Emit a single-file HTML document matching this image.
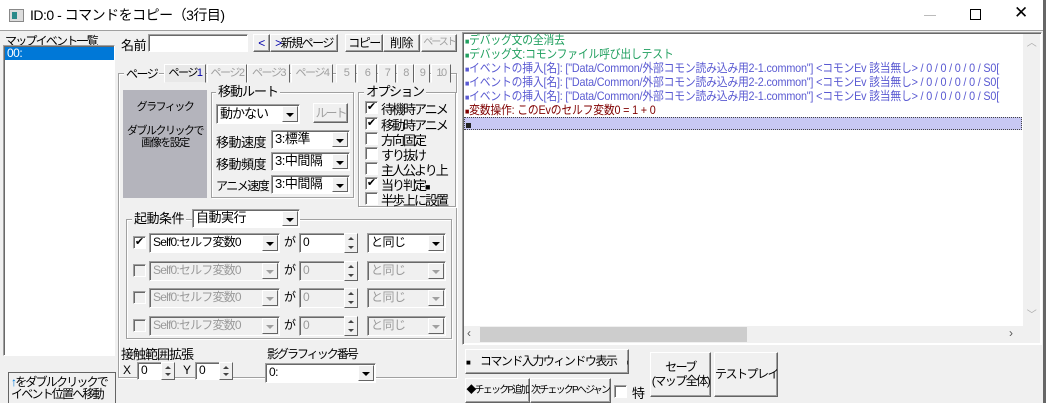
<!DOCTYPE html>
<html><head><meta charset="utf-8"><style>
*{box-sizing:border-box;margin:0;padding:0;white-space:nowrap}
body{width:1046px;height:403px;overflow:hidden;background:#f0f0f0;font-family:"Liberation Sans","Noto Sans CJK JP",sans-serif;font-size:12px;color:#000;position:relative;letter-spacing:-0.5px}
.a{position:absolute}
.btn{position:absolute;background:#f0f0f0;border:1px solid;border-color:#fff #646464 #646464 #fff;box-shadow:inset -1px -1px 0 #a0a0a0;text-align:center;font-size:12px;line-height:16px;overflow:hidden}
.dis{color:#a0a0a0}
.sunk{position:absolute;background:#fff;border:1px solid;border-color:#a0a0a0 #fff #fff #a0a0a0;box-shadow:inset 1px 1px 0 #696969}
.combo{position:absolute;background:#fff;border:1px solid;border-color:#a0a0a0 #fff #fff #a0a0a0;box-shadow:inset 1px 1px 0 #696969;padding-left:3px;font-size:12px;line-height:16px;overflow:hidden}
.combo.g{background:#f0f0f0;color:#9a9a9a}
.combo .ar{position:absolute;right:1px;top:1px;bottom:1px;width:16px;background:#f0f0f0;border:1px solid;border-color:#fff #646464 #646464 #fff}
.combo .ar:after{content:"";position:absolute;left:3px;top:6px;border-left:4px solid transparent;border-right:4px solid transparent;border-top:4px solid #000}
.combo.g .ar:after{border-top-color:#a0a0a0}
.grp{position:absolute;border:1px solid #a0a0a0;box-shadow:1px 1px 0 #fff,inset 1px 1px 0 #fff}
.gt{position:absolute;background:#f0f0f0;padding:0 2px;font-size:13px;line-height:14px}
.cb{position:absolute;width:13px;height:13px;background:#fff;border:1px solid;border-color:#a0a0a0 #fff #fff #a0a0a0;box-shadow:inset 1px 1px 0 #696969;font-size:11px;line-height:11px;text-align:center;letter-spacing:0}
.cb.g{background:#f0f0f0}
.tab{position:absolute;top:64px;height:19px;border:1px solid;border-color:#fff #646464 #f0f0f0 #fff;color:#a0a0a0;text-align:center;font-size:11px;line-height:17px;background:#f0f0f0;letter-spacing:-1.5px;overflow:hidden}
.spin{position:absolute;width:14px;background:#f0f0f0;border:1px solid;border-color:#fff #646464 #646464 #fff}
.spin:before{content:"";position:absolute;left:3px;top:3px;border-left:3px solid transparent;border-right:3px solid transparent;border-bottom:3px solid #444}
.spin:after{content:"";position:absolute;left:3px;bottom:3px;border-left:3px solid transparent;border-right:3px solid transparent;border-top:3px solid #444}
.ln{position:absolute;left:465px;font-size:12px;line-height:14px;transform:scaleX(0.9);transform-origin:left;letter-spacing:-0.2px}
.opt{position:absolute;left:381px;font-size:13px;letter-spacing:-2px}
</style></head><body>
<div class="a" style="left:0;top:0;width:1046px;height:30px;background:#fff"></div>
<div class="a" style="left:9px;top:9px;width:15px;height:13px;border:1px solid #888;background:#ddd"><div style="position:absolute;left:2px;top:2px;width:5px;height:7px;background:#2a8a8a"></div></div>
<div class="a" style="left:30px;top:5px;font-size:14px;line-height:20px;letter-spacing:-0.5px">ID:0 -  コマンドをコピー（3行目)</div>
<div class="a" style="left:924px;top:15px;width:12px;height:1px;background:#bbb"></div>
<div class="a" style="left:970px;top:9px;width:11px;height:11px;border:1px solid #000"></div>
<div class="a" style="left:1014px;top:3px;font-size:17px;line-height:20px">✕</div>
<div class="a" style="left:0;top:30px;width:1046px;height:1px;background:#a0a0a0"></div>
<div class="a" style="left:1043px;top:0;width:3px;height:403px;background:#666"></div>

<div class="a" style="left:5px;top:32px;font-size:12px;letter-spacing:-1.8px">マップイベント一覧</div>
<div class="sunk" style="left:3px;top:45px;width:112px;height:311px"></div>
<div class="a" style="left:5px;top:47px;width:109px;height:13px;background:#0078d7;color:#fff;font-size:12px;line-height:13px;padding-left:2px">00:</div>
<div class="a" style="left:8px;top:372px;width:108px;height:31px;border:1px solid #646464;border-bottom:none;font-size:12px;line-height:12px;padding:3px 0 0 2px;letter-spacing:-1.8px;overflow:hidden"><span style="color:#0078d7">↑</span>をダブルクリックで<br>イベント位置へ移動</div>

<div class="a" style="left:121px;top:35px;font-size:13px">名前</div>
<div class="sunk" style="left:148px;top:34px;width:100px;height:18px"></div>
<div class="btn" style="left:253px;top:34px;width:17px;height:18px;color:#00a">&lt;</div>
<div class="btn" style="left:270px;top:34px;width:68px;height:18px;letter-spacing:-1.5px"><span style="color:#00a">&gt;</span>新規ページ</div>
<div class="btn" style="left:345px;top:34px;width:38px;height:18px;letter-spacing:-1.5px">コピー</div>
<div class="btn" style="left:383px;top:34px;width:37px;height:18px">削除</div>
<div class="btn dis" style="left:421px;top:34px;width:36px;height:18px;font-size:10px;letter-spacing:-2px">ペースト</div>

<div class="grp" style="left:118px;top:73px;width:339px;height:305px"></div>
<div class="gt" style="left:124px;top:67px;font-size:12px;letter-spacing:-1.5px">ページ</div>
<div class="tab" style="left:164px;width:42px;color:#000;background:#e8e8e8">ページ<span style="color:#00a">1</span></div>
<div class="tab" style="left:207px;width:40px">ページ2</div>
<div class="tab" style="left:247px;width:43px">ページ3</div>
<div class="tab" style="left:291px;width:42px">ページ4</div>
<div class="tab" style="left:336px;width:20px">5</div>
<div class="tab" style="left:357px;width:20px">6</div>
<div class="tab" style="left:378px;width:18px">7</div>
<div class="tab" style="left:397px;width:17px">8</div>
<div class="tab" style="left:414px;width:16px">9</div>
<div class="tab" style="left:431px;width:20px">10</div>

<div class="a" style="left:123px;top:90px;width:84px;height:108px;background:#b4b4bc;text-align:center;font-size:11px;line-height:12px;padding-top:11px;letter-spacing:-1.5px">グラフィック<br><br>ダブルクリックで<br>画像を設定</div>

<div class="grp" style="left:211px;top:92px;width:143px;height:106px"></div>
<div class="gt" style="left:216px;top:85px;font-size:13px;letter-spacing:-1px">移動ルート</div>
<div class="combo" style="left:216px;top:104px;width:84px;height:20px;font-size:13px;line-height:17px;letter-spacing:-1px">動かない<div class="ar"></div></div>
<div class="btn dis" style="left:313px;top:103px;width:35px;height:20px;letter-spacing:-2px;line-height:18px">ルート</div>
<div class="a" style="left:216px;top:132px;font-size:13px;letter-spacing:-0.5px">移動速度</div>
<div class="combo" style="left:271px;top:130px;width:79px;height:19px;font-size:13px;line-height:16px">3:標準<div class="ar"></div></div>
<div class="a" style="left:216px;top:154px;font-size:13px;letter-spacing:-0.5px">移動頻度</div>
<div class="combo" style="left:271px;top:152px;width:79px;height:19px;font-size:13px;line-height:16px">3:中間隔<div class="ar"></div></div>
<div class="a" style="left:216px;top:177px;font-size:12px;letter-spacing:-1.5px">アニメ速度</div>
<div class="combo" style="left:271px;top:175px;width:79px;height:19px;font-size:13px;line-height:16px">3:中間隔<div class="ar"></div></div>

<div class="grp" style="left:358px;top:92px;width:98px;height:115px"></div>
<div class="gt" style="left:364px;top:85px;font-size:13px;letter-spacing:-1.5px">オプション</div>
<div class="cb" style="left:365px;top:101px">✔</div><div class="opt" style="top:99px">待機時アニメ</div>
<div class="cb" style="left:365px;top:117px">✔</div><div class="opt" style="top:115px">移動時アニメ</div>
<div class="cb" style="left:365px;top:132px"></div><div class="opt" style="top:130px">方向固定</div>
<div class="cb" style="left:365px;top:147px"></div><div class="opt" style="top:145px">すり抜け</div>
<div class="cb" style="left:365px;top:162px"></div><div class="opt" style="top:160px">主人公より上</div>
<div class="cb" style="left:365px;top:177px">✔</div><div class="opt" style="top:175px">当り判定<span style="font-size:9px">■</span></div>
<div class="cb" style="left:365px;top:192px"></div><div class="opt" style="top:190px">半歩上に設置</div>

<div class="grp" style="left:126px;top:219px;width:326px;height:120px"></div>
<div class="gt" style="left:132px;top:212px;font-size:13px">起動条件</div>
<div class="combo" style="left:192px;top:209px;width:108px;height:19px;font-size:13px;line-height:16px">自動実行<div class="ar"></div></div>

<div class="cb" style="left:133px;top:236px">✔</div>
<div class="combo" style="left:149px;top:233px;width:131px;height:20px;color:#000;letter-spacing:-0.8px">Self0:セルフ変数0<div class="ar"></div></div>
<div class="a" style="left:284px;top:233px;font-size:12px">が</div>
<div class="combo" style="left:299px;top:233px;width:46px;height:20px">0</div><div class="spin" style="left:344px;top:233px;height:20px"></div>
<div class="combo" style="left:367px;top:233px;width:79px;height:20px">と同じ<div class="ar"></div></div>

<div class="cb g" style="left:133px;top:264px"></div>
<div class="combo g" style="left:149px;top:261px;width:131px;height:20px;letter-spacing:-0.8px">Self0:セルフ変数0<div class="ar"></div></div>
<div class="a" style="left:284px;top:261px">が</div>
<div class="combo g" style="left:299px;top:261px;width:46px;height:20px">0</div><div class="spin" style="left:344px;top:261px;height:20px"></div>
<div class="combo g" style="left:367px;top:261px;width:79px;height:20px">と同じ<div class="ar"></div></div>

<div class="cb g" style="left:133px;top:291px"></div>
<div class="combo g" style="left:149px;top:288px;width:131px;height:20px;letter-spacing:-0.8px">Self0:セルフ変数0<div class="ar"></div></div>
<div class="a" style="left:284px;top:288px">が</div>
<div class="combo g" style="left:299px;top:288px;width:46px;height:20px">0</div><div class="spin" style="left:344px;top:288px;height:20px"></div>
<div class="combo g" style="left:367px;top:288px;width:79px;height:20px">と同じ<div class="ar"></div></div>

<div class="cb g" style="left:133px;top:319px"></div>
<div class="combo g" style="left:149px;top:316px;width:131px;height:20px;letter-spacing:-0.8px">Self0:セルフ変数0<div class="ar"></div></div>
<div class="a" style="left:284px;top:316px">が</div>
<div class="combo g" style="left:299px;top:316px;width:46px;height:20px">0</div><div class="spin" style="left:344px;top:316px;height:20px"></div>
<div class="combo g" style="left:367px;top:316px;width:79px;height:20px">と同じ<div class="ar"></div></div>

<div class="a" style="left:121px;top:344px;font-size:13px;letter-spacing:-1px">接触範囲拡張</div>
<div class="a" style="left:123px;top:363px">X</div>
<div class="combo" style="left:137px;top:362px;width:25px;height:18px;line-height:15px">0</div><div class="spin" style="left:161px;top:362px;height:18px"></div>
<div class="a" style="left:183px;top:363px">Y</div>
<div class="combo" style="left:195px;top:362px;width:25px;height:18px;line-height:15px">0</div><div class="spin" style="left:219px;top:362px;height:18px"></div>
<div class="a" style="left:267px;top:345px;font-size:12px;letter-spacing:-2px">影グラフィック番号</div>
<div class="combo" style="left:265px;top:363px;width:111px;height:20px">0:<div class="ar"></div></div>

<div class="sunk" style="left:462px;top:32px;width:580px;height:313px"></div>
<div class="ln" style="top:33px;color:#22a060"><span style="font-size:8px">■</span>デバッグ文の全消去</div>
<div class="ln" style="top:47px;color:#22a060"><span style="font-size:8px">■</span>デバッグ文:コモンファイル呼び出しテスト</div>
<div class="ln" style="top:61px;color:#5a5ad2"><span style="font-size:8px">■</span>イベントの挿入[名]: ["Data/Common/外部コモン読み込み用2-1.common"] &lt;コモンEv 該当無し&gt;  / 0 / 0 / 0 / 0 / S0[</div>
<div class="ln" style="top:75px;color:#5a5ad2"><span style="font-size:8px">■</span>イベントの挿入[名]: ["Data/Common/外部コモン読み込み用2-2.common"] &lt;コモンEv 該当無し&gt;  / 0 / 0 / 0 / 0 / S0[</div>
<div class="ln" style="top:89px;color:#5a5ad2"><span style="font-size:8px">■</span>イベントの挿入[名]: ["Data/Common/外部コモン読み込み用2-1.common"] &lt;コモンEv 該当無し&gt;  / 0 / 0 / 0 / 0 / S0[</div>
<div class="ln" style="top:103px;color:#800000"><span style="font-size:8px">■</span>変数操作: このEvのセルフ変数0 = 1 + 0</div>
<div class="a" style="left:464px;top:117px;width:558px;height:13px;background:#c8c8f4;border:1px dotted #444"><div style="position:absolute;left:1px;top:5px;width:5px;height:5px;background:#222"></div></div>
<div class="a" style="left:1023px;top:34px;width:17px;height:292px;background:#f0f0f0;color:#aaa;text-align:center;font-size:10px">︿<div style="position:absolute;top:272px;width:17px">﹀</div></div>
<div class="a" style="left:464px;top:326px;width:576px;height:17px;background:#f0f0f0"><div style="position:absolute;left:16px;top:1px;width:267px;height:15px;background:#cdcdcd"></div><div style="position:absolute;left:3px;top:0;font-size:12px;color:#555">‹</div><div style="position:absolute;left:545px;top:0;font-size:12px;color:#555">›</div></div>

<div class="btn" style="left:465px;top:349px;width:164px;height:25px;line-height:23px;letter-spacing:-1.5px"><span style="font-size:8px">■</span>　コマンド入力ウィンドウ表示　<span style="font-size:8px">■</span></div>
<div class="btn" style="left:465px;top:378px;width:65px;height:25px;line-height:23px;font-size:10px;letter-spacing:-1.8px">◆チェックP追加</div>
<div class="btn" style="left:530px;top:378px;width:81px;height:25px;line-height:23px;font-size:10px;letter-spacing:-1.8px">次チェックPへジャンプ</div>
<div class="cb" style="left:614px;top:385px"></div><div class="a" style="left:632px;top:383px;font-size:13px">特</div>
<div class="btn" style="left:650px;top:352px;width:61px;height:45px;line-height:14px;padding-top:7px;letter-spacing:-1.5px">セーブ<br>(マップ全体)</div>
<div class="btn" style="left:714px;top:352px;width:64px;height:45px;line-height:43px;letter-spacing:-1.5px">テストプレイ</div>
</body></html>
